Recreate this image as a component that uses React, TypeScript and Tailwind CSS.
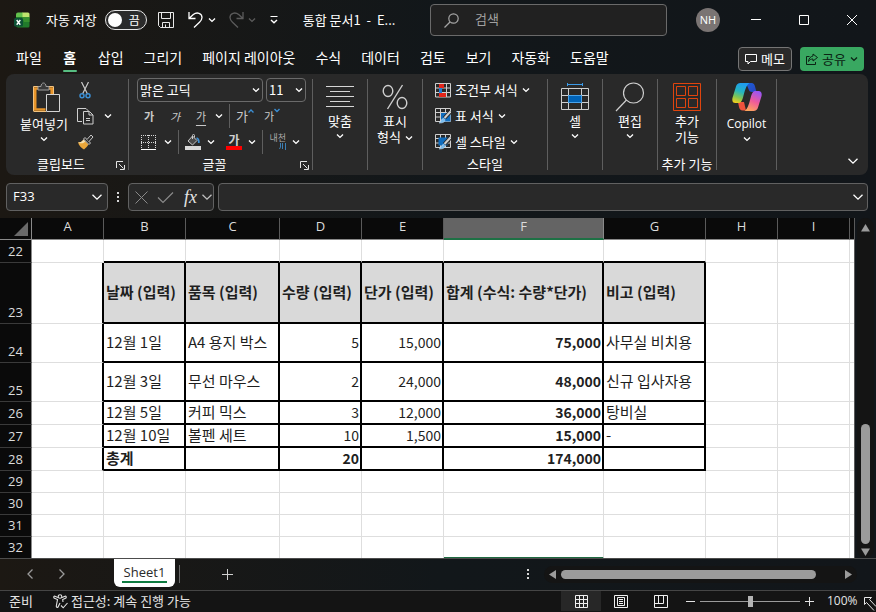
import type { ReactNode } from "react";

/* ---------- small shared pieces ---------- */

function Chevron({ className = "" }: { className?: string }) {
  return (
    <svg width="8" height="8" viewBox="0 0 8 8" fill="none" className={`shrink-0 ${className}`} aria-hidden="true">
      <path d="M1 2.6 4 5.4 7 2.6" stroke="currentColor" strokeWidth="1.4" />
    </svg>
  );
}

function WideChevron({ className = "" }: { className?: string }) {
  return (
    <svg width="12" height="12" viewBox="0 0 12 12" fill="none" className={`shrink-0 ${className}`} aria-hidden="true">
      <path d="M1.5 3.8 6 8.2l4.5-4.4" stroke="currentColor" strokeWidth="1.3" />
    </svg>
  );
}

function Dots() {
  return (
    <svg width="4" height="12" viewBox="0 0 4 12" className="shrink-0" aria-hidden="true">
      <path d="M1 1h2v2H1zM1 5h2v2H1zM1 9h2v2H1z" fill="#d6d6d6" />
    </svg>
  );
}

function Launcher() {
  return (
    <button aria-label="대화 상자 표시" className="text-[#e4e4e4]">
      <svg width="9" height="9" viewBox="0 0 9 9" fill="none" aria-hidden="true">
        <path d="M.5 7V.5H7M3 3l4.5 4.5M8.5 4v4.5H4" stroke="currentColor" />
      </svg>
    </button>
  );
}

function Separator() {
  return <div className="my-[5px] w-px shrink-0 bg-[#5e5e5e]" />;
}

function Group({ label, width, launcher, children }: { label?: string; width: string; launcher?: boolean; children: ReactNode }) {
  return (
    <section className={`flex shrink-0 flex-col pt-[3px] ${width}`}>
      <div className="h-[78px]">{children}</div>
      {label && (
        <div className="flex h-[18px] items-center">
          <span className="flex-1 whitespace-nowrap text-center">{label}</span>
          {launcher && <span className="flex w-[9px] justify-end pt-[3px]"><Launcher /></span>}
        </div>
      )}
    </section>
  );
}

function BigButton({ icon, label, inline, latin }: { icon: ReactNode; label: string; inline?: boolean; latin?: boolean }) {
  const single = !label.includes("\n");
  return (
    <button className="flex w-full flex-col items-center pt-[4px]">
      <span className="flex h-[32px] items-center">{icon}</span>
      <span className={latin ? "mt-[3px] font-['Open_Sans',sans-serif] text-xs leading-4" : "whitespace-pre text-center leading-4"}>
        {label}
        {inline && <Chevron className="ml-1 inline-block" />}
      </span>
      {single && <Chevron className="mt-[3px]" />}
    </button>
  );
}

/* ---------- icons ---------- */

function ExcelIcon() {
  return (
    <svg width="16" height="16" viewBox="0 0 16 16" aria-hidden="true">
      <path d="M2 2.5A2 2 0 0 1 4 .5h5v5H2z" fill="#63c14d" />
      <path d="M8.500 .5H14a1.500 1.500 0 0 1 1.500 1.500v3.500h-7z" fill="#bfe56f" />
      <path d="M2 5h13.500v9A1.500 1.500 0 0 1 14 15.500H4a2 2 0 0 1-2-2z" fill="#217a2b" />
      <path d="M8 5h7.500v5H10z" fill="#38912f" />
      <rect x="0" y="6" width="9" height="8.500" rx="1.500" fill="#0d5135" />
      <path d="m2.700 8 3.600 4.700M6.300 8l-3.600 4.700" stroke="#fff" strokeWidth="1.400" />
    </svg>
  );
}

function SaveIcon() {
  return (
    <svg width="16" height="16" viewBox="0 0 16 16" fill="none" stroke="#e8e8e8" aria-hidden="true">
      <path d="M.5.500h15v15h-13l-2-2zM3.500.500v6h9v-6M4.500 15.500v-5h7v5M7.500 12.500v3" />
    </svg>
  );
}

function UndoIcon() {
  return (
    <svg width="16" height="16" viewBox="0 0 16 16" fill="none" stroke="currentColor" strokeWidth="1.300" aria-hidden="true">
      <path d="M1 0v6.500h6.500M1.300 6.200l4-3.600C9-.400 14 1.200 14 5.500c0 2-1.300 3.500-2.500 4.700L6 15.500" />
    </svg>
  );
}

function PasteIcon() {
  return (
    <svg width="34" height="31" viewBox="-6 0 34 31" fill="none" aria-hidden="true">
      <path d="M12.500 27.500H2.200V6.500H5M16 6.500h2.700V12" stroke="#e8952a" strokeWidth="2.600" />
      <path d="M.5 29V4.500h5M15.500 4.500h5V12M.5 29.500H13" stroke="#f4c27d" />
      <path d="M5 8V4.500h3C8 2.500 9 1 10.500 1S13 2.500 13 4.500h3V8z" fill="#3a3a3a" stroke="#9d9d9d" />
      <path d="M13.500 12.500h13v17h-13z" fill="#292929" stroke="#d4d4d4" />
    </svg>
  );
}

function CutIcon() {
  return (
    <svg width="12" height="17" viewBox="0 0 12 17" fill="none" aria-hidden="true">
      <path d="M2.500 0 8.500 12M9.500 0l-6 12" stroke="#c9c9c9" strokeWidth="1.200" />
      <circle cx="3" cy="13.700" r="2" stroke="#3c8fd4" strokeWidth="1.500" />
      <circle cx="9" cy="13.700" r="2" stroke="#3c8fd4" strokeWidth="1.500" />
    </svg>
  );
}

function CopyIcon() {
  return (
    <svg width="17" height="17" viewBox="0 0 17 17" fill="none" stroke="#cfcfcf" aria-hidden="true">
      <path d="M5 13.500H.5V.500H9L11.500 3" />
      <path d="M6.500 3.500h6l3.500 3.500v9H6.500zM12 3.500V7h4M9 10.500h4M9 12.500h4" />
    </svg>
  );
}

function BrushIcon() {
  return (
    <svg width="17" height="16" viewBox="0 0 17 16" fill="none" aria-hidden="true">
      <path d="M1 8.500c3 0 4-1 5.500-3l5 5C10 12.500 9 14 7 15.500 4.500 14 2 12 1 8.500z" fill="#e9a63a" />
      <path d="M1 8.500c3 0 4-1 5.500-3l2 2C6 9.500 4 10 1 8.500z" fill="#f6dfab" />
      <path d="m6.500 5 5.500 5.500 1.500-1.500L8 3.500z" fill="#292929" stroke="#c9c9c9" />
      <path d="m10 5.500 4-4.500 2 2-4 4.500" fill="#292929" stroke="#c9c9c9" />
    </svg>
  );
}

function BorderIcon() {
  return (
    <svg width="15" height="15" viewBox="0 0 15 15" fill="none" stroke="#d8d8d8" aria-hidden="true">
      <path d="M0 .5h15M0 7.500h15M.5 0v14M7.500 0v14M14.500 0v14" strokeDasharray="1 1" />
      <path d="M0 14.500h15" stroke="#fff" />
    </svg>
  );
}

function FillIcon() {
  return (
    <svg width="16" height="16" viewBox="0 0 16 16" fill="none" aria-hidden="true">
      <path d="m7.500 2 4.500 4.500L7.500 11 3 7z" fill="#4a4a4a" stroke="#c9c9c9" />
      <path d="M7.500 5V1.500a1 1 0 0 1 2 0v2" stroke="#c9c9c9" />
      <path d="M11.500 4c2 .5 2.500 2.500 2.300 5" stroke="#3c8fd4" strokeWidth="1.800" />
      <path d="M0 12h16v4H0z" fill="#d9d9d9" />
    </svg>
  );
}

function AlignIcon() {
  return (
    <svg width="28" height="22" viewBox="0 0 28 22" stroke="#d6d6d6" aria-hidden="true">
      <path d="M0 .5h28M4 5.500h20M0 10.500h28M4 15.500h20M0 20.500h28" />
    </svg>
  );
}

function PercentIcon() {
  return (
    <svg width="26" height="26" viewBox="0 0 26 26" fill="none" stroke="#cfcfcf" strokeWidth="1.400" aria-hidden="true">
      <ellipse cx="6" cy="7" rx="4.800" ry="5.500" />
      <ellipse cx="20" cy="19" rx="4.800" ry="5.500" />
      <path d="M20.500 1 5.500 25" />
    </svg>
  );
}

function ConditionalIcon() {
  return (
    <svg width="16" height="15" viewBox="0 0 16 15" fill="none" aria-hidden="true">
      <path d="M.5.500h15v13.500H.500zM4.500.500V14M11.500.500V14M.5 5H16M.5 9.500H16" stroke="#cfcfcf" />
      <path d="M4 1h5v4H4zM4 10h7v4H4z" fill="#e3261b" />
      <path d="M4 5h3v5H4z" fill="#1f7fd6" />
    </svg>
  );
}

function TableFormatIcon({ filled }: { filled?: boolean }) {
  return (
    <svg width="16" height="16" viewBox="0 0 16 16" fill="none" aria-hidden="true">
      <path d="M.5.500h15v13H.500zM5.500.500v13M10.500.500v13M.5 4.500H16M.5 9H16" stroke="#cfcfcf" />
      {filled ? <path d="M3.500 3.500h9v8h-9z" fill="#0f6cbd" /> : <path d="M6 5h9.500v8.500H6z" fill="#0f6cbd" />}
      <path d="m15.500 3.500-6 6.500" stroke="#292929" strokeWidth="4" />
      <path d="m15.500 3.500-6 6.500" stroke="#d0d0d0" strokeWidth="2" />
      <path d="M4 15c2-.5 2-4.500 4.500-4.500 2.500.5 2 5-4.500 4.500z" fill="#79bdf0" stroke="#cfe7fa" strokeWidth=".5" />
    </svg>
  );
}

function CellsIcon() {
  return (
    <svg width="28" height="28" viewBox="0 0 28 28" fill="none" aria-hidden="true">
      <path d="M6.500 1.500h15M6.500 0v3M21.500 0v3" stroke="#3c9be8" />
      <path d="M.5 5.500h27v21H.500zM7.500 5.500v21M20.500 5.500v21M.5 12.500h27M.5 19.500h27" stroke="#cfcfcf" />
      <path d="M7.500 12.500h13v7h-13z" fill="#0063b8" stroke="#4aa3ea" />
    </svg>
  );
}

function EditIcon() {
  return (
    <svg width="30" height="30" viewBox="0 0 30 30" fill="none" stroke="#cfcfcf" strokeWidth="1.200" aria-hidden="true">
      <circle cx="18.500" cy="11" r="10" />
      <path d="M11.500 18 1 29" />
    </svg>
  );
}

function AddInsIcon() {
  return (
    <svg width="28" height="28" viewBox="0 0 28 28" fill="none" stroke="#e0440e" aria-hidden="true">
      <path d="M.5.500h27v27H.500zM3.500 3.500h9v9h-9zM15.500 3.500h9v9h-9zM3.500 15.500h9v9h-9zM15.500 15.500h9v9h-9z" />
    </svg>
  );
}

function CopilotIcon() {
  return (
    <svg width="30" height="28" viewBox="0 0 30 28" aria-hidden="true">
      <defs>
        <linearGradient id="cpA" x1="0.500" y1="0" x2="0.200" y2="1">
          <stop offset="0" stopColor="#1f9cf0" />
          <stop offset=".4" stopColor="#25b5c0" />
          <stop offset=".7" stopColor="#7fc455" />
          <stop offset="1" stopColor="#f5cf1b" />
        </linearGradient>
        <linearGradient id="cpB" x1="0.700" y1="0" x2="0.300" y2="1">
          <stop offset="0" stopColor="#9a55f5" />
          <stop offset=".5" stopColor="#ef5a9b" />
          <stop offset="1" stopColor="#fda45c" />
        </linearGradient>
        <linearGradient id="cpC" x1="0" y1="0" x2="1" y2="1">
          <stop offset="0" stopColor="#1a5fd8" />
          <stop offset="1" stopColor="#2a45c0" />
        </linearGradient>
      </defs>
      <path d="M14 0h5.500c2 0 3 1.500 3.500 3.500L24.500 9H20c-2 0-3-1-3.500-3z" fill="url(#cpC)" />
      <path d="M6 19h6l2 8.500h-3.500c-2 0-3-1.500-3.500-3.500z" fill="#f0523d" />
      <path d="M8.500 0h9C14 2 12.500 9 11 14.500c-1 3.500-2 5.500-5 5.500H3.500C.5 20-.2 17.500.6 14.500L4 3.500C4.700 1.500 6 0 8.500 0z" fill="url(#cpA)" />
      <path d="M21.500 28h-9c3.500-2 5-9 6.500-14.500 1-3.500 2-5.500 5-5.500h2.500c3 0 3.700 2.500 2.900 5.500L26 24.500C25.300 26.500 24 28 21.500 28z" fill="url(#cpB)" />
    </svg>
  );
}

/* ---------- title bar and tabs ---------- */

function TitleBar() {
  return (
    <header className="flex h-10 items-center">
      <div className="flex w-[430px] shrink-0 items-center pl-[14px] text-[13px]">
        <ExcelIcon />
        <label className="ml-4 flex items-center gap-2 whitespace-nowrap">
          자동 저장
          <input type="checkbox" role="switch" className="peer sr-only" />
          <span className="flex h-5 w-[42px] items-center justify-between rounded-full border border-[#e6e6e6] bg-[#2b2b2b] pl-[2px] pr-[6px]">
            <span className="size-[14px] rounded-full bg-white" />
            <span className="text-xs">끔</span>
          </span>
        </label>
        <button aria-label="저장" className="ml-[11px]"><SaveIcon /></button>
        <button aria-label="실행 취소" className="ml-[14px] flex items-center gap-1"><UndoIcon /><Chevron /></button>
        <button aria-label="다시 실행" className="ml-3 flex items-center gap-1 text-[#5b5b5b]">
          <span className="-scale-x-100"><UndoIcon /></span><Chevron />
        </button>
        <button aria-label="빠른 실행 도구 모음 사용자 지정" className="ml-[14px]">
          <svg width="8" height="8" viewBox="0 0 8 8" fill="none" stroke="currentColor" aria-hidden="true">
            <path d="M.5.500h7" /><path d="M1 4l3 2.800L7 4" strokeWidth="1.400" />
          </svg>
        </button>
        <h1 className="ml-[25px] whitespace-pre">통합 문서1  -  E...</h1>
      </div>
      <label className="flex h-8 min-w-0 flex-1 items-center gap-4 rounded border border-[#6a6a6a] bg-[#212121] px-[13px]">
        <svg width="15" height="15" viewBox="0 0 15 15" fill="none" stroke="#a5a5a5" strokeWidth="1.200" className="shrink-0" aria-hidden="true">
          <circle cx="9.500" cy="5.500" r="4.700" /><path d="M6 9 .5 14.500" />
        </svg>
        <input type="search" aria-label="검색" placeholder="검색" className="min-w-0 flex-1 bg-transparent pb-[3px] text-[13px] outline-none placeholder:text-[#a0a0a0]" />
      </label>
      <button className="ml-[29px] mr-3 size-6 rounded-full bg-[#7a7473] font-['Open_Sans',sans-serif] text-[11px]">NH</button>
      <button aria-label="최소화" className="flex h-10 w-12 items-center justify-center">
        <svg width="10" height="10" stroke="#fff" aria-hidden="true"><path d="M0 4.500h10" /></svg>
      </button>
      <button aria-label="최대화" className="flex h-10 w-12 items-center justify-center">
        <svg width="10" height="10" fill="none" stroke="#fff" aria-hidden="true"><path d="M.5.500h9v9h-9z" /></svg>
      </button>
      <button aria-label="닫기" className="flex h-10 w-12 items-center justify-center">
        <svg width="10" height="10" stroke="#fff" aria-hidden="true"><path d="m0 0 10 10M10 0 0 10" /></svg>
      </button>
    </header>
  );
}

const tabs = ["파일", "홈", "삽입", "그리기", "페이지 레이아웃", "수식", "데이터", "검토", "보기", "자동화", "도움말"];

function TabRow() {
  return (
    <div className="flex h-[34px] items-center pl-4 pr-3 pt-1">
      <nav className="flex flex-1 gap-5 text-sm">
        {tabs.map((tab) => (
          <button
            key={tab}
            className={`flex h-[26px] flex-col items-center justify-between whitespace-nowrap leading-[22px] ${tab === "홈" ? "px-px font-bold" : ""}`}
          >
            {tab}
            {tab === "홈" && <span className="h-[2px] w-[14px] rounded bg-[#57bd82]" />}
          </button>
        ))}
      </nav>
      <button className="flex h-6 w-[54px] items-center justify-center gap-1 rounded border border-[#757575] bg-[#2a2a2a] text-[13px]">
        <svg width="12" height="12" viewBox="0 0 12 12" fill="none" stroke="#fff" aria-hidden="true">
          <path d="M.5 1.500h11v7h-6l-2.500 2.500V8.500H.500z" />
        </svg>
        메모
      </button>
      <button className="ml-2 flex h-6 w-16 items-center justify-center gap-1 rounded bg-[#39a861] text-[13px] text-[#0b2314]">
        <svg width="12" height="12" viewBox="0 0 12 12" fill="none" stroke="currentColor" aria-hidden="true">
          <path d="M3.500 3.500h-3v8h9V9M7 1l4.500 3.500L7 8V6C5 6 3.500 6.500 2.500 8.500 2.700 5.500 4.500 3.500 7 3z" />
        </svg>
        공유
        <Chevron />
      </button>
    </div>
  );
}

/* ---------- ribbon ---------- */

function Ribbon() {
  return (
    <div className="mx-2 ml-[6px] flex h-[101px] overflow-hidden rounded-lg bg-[#292929] text-[13px] leading-4">
      <Group label="클립보드" width="w-[122px] pr-[3px]" launcher>
        <div className="flex pl-[13px]">
          <button className="flex w-[50px] flex-col items-center pt-[5px]">
            <PasteIcon />
            <span className="mt-[3px] whitespace-nowrap">붙여넣기</span>
            <Chevron className="mt-[3px]" />
          </button>
          <div className="flex flex-col pl-2">
            <button aria-label="잘라내기" className="flex h-[26px] items-center pl-[2px]"><CutIcon /></button>
            <button aria-label="복사" className="flex h-[26px] items-center gap-[10px]"><CopyIcon /><Chevron /></button>
            <button aria-label="서식 복사" className="flex h-[26px] items-center"><BrushIcon /></button>
          </div>
        </div>
      </Group>
      <Separator />
      <Group label="글꼴" width="w-[183px] pr-[3px]" launcher>
        <div className="pl-2">
          <div className="flex h-[26px] items-center gap-[3px]">
            <label className="flex h-6 w-[126px] items-center rounded border border-[#6a6a6a] pl-[2px] pr-[2px]">
              <select aria-label="글꼴" className="min-w-0 flex-1 appearance-none bg-transparent outline-none"><option>맑은 고딕</option></select>
              <Chevron />
            </label>
            <label className="flex h-6 w-[40px] items-center rounded border border-[#6a6a6a] pl-[2px] pr-[2px]">
              <select aria-label="글꼴 크기" className="min-w-0 flex-1 appearance-none bg-transparent outline-none"><option>11</option></select>
              <Chevron />
            </label>
          </div>
          <div className="flex h-[26px] items-center text-[11px] text-[#c9c9c9]">
            <button className="w-6 text-center font-bold">가</button>
            <button className="ml-[2px] w-6 text-center italic">가</button>
            <button className="ml-[2px] w-6 text-center underline underline-offset-4">가</button>
            <Chevron className="ml-[2px] text-white" />
            <span className="mx-[6px] h-6 w-px bg-[#5e5e5e]" />
            <button aria-label="글꼴 크기 크게" className="flex w-[20px] text-[13px]">
              가<svg width="6" height="6" fill="none" stroke="#3c8fd4" strokeWidth="1.400" aria-hidden="true"><path d="M.5 4.500 3 2l2.500 2.500" /></svg>
            </button>
            <button aria-label="글꼴 크기 작게" className="ml-2 flex w-[20px]">
              가<svg width="6" height="6" fill="none" stroke="#3c8fd4" strokeWidth="1.400" aria-hidden="true"><path d="M.5 1 3 3.500 5.500 1" /></svg>
            </button>
          </div>
          <div className="flex h-[26px] items-center">
            <button aria-label="테두리" className="flex items-center gap-2 pl-1"><BorderIcon /><Chevron /></button>
            <span className="mx-[6px] h-6 w-px bg-[#5e5e5e]" />
            <button aria-label="채우기 색" className="flex items-center gap-[6px]"><FillIcon /><Chevron /></button>
            <button aria-label="글꼴 색" className="ml-[11px] flex items-center gap-[6px]">
              <span className="flex w-4 flex-col items-center text-xs font-bold leading-3 text-[#d0d0d0]">가<span className="h-1 w-4 bg-[#fe0000]" /></span>
              <Chevron />
            </button>
            <span className="mx-[6px] h-6 w-px bg-[#5e5e5e]" />
            <button aria-label="윗주 필드" className="flex items-center gap-[6px]">
              <span className="flex w-[17px] flex-col items-end text-[9px] leading-2 text-[#a8a8a8]">
                <span className="whitespace-nowrap">내천</span>
                <svg width="7" height="8" fill="none" stroke="#3c7fb4" aria-hidden="true"><path d="M1.500 1v4L.5 7M3.500 1v6M6.500 1v7" /></svg>
              </span>
              <Chevron />
            </button>
          </div>
        </div>
      </Group>
      <Separator />
      <Group width="w-[54px]"><BigButton icon={<AlignIcon />} label="맞춤" /></Group>
      <Separator />
      <Group width="w-[54px]"><BigButton icon={<PercentIcon />} label={"표시\n형식"} inline /></Group>
      <Separator />
      <Group label="스타일" width="w-[124px]">
        <div className="flex flex-col items-start pl-3">
          <button className="flex h-[26px] items-center gap-1 whitespace-nowrap"><ConditionalIcon />조건부 서식<Chevron /></button>
          <button className="flex h-[26px] items-center gap-1 whitespace-nowrap"><TableFormatIcon />표 서식<Chevron /></button>
          <button className="flex h-[26px] items-center gap-1 whitespace-nowrap"><TableFormatIcon filled />셀 스타일<Chevron /></button>
        </div>
      </Group>
      <Separator />
      <Group width="w-[54px]"><BigButton icon={<CellsIcon />} label="셀" /></Group>
      <Separator />
      <Group width="w-[54px]"><BigButton icon={<EditIcon />} label="편집" /></Group>
      <Separator />
      <Group label="추가 기능" width="w-[58px]"><BigButton icon={<AddInsIcon />} label={"추가\n기능"} /></Group>
      <Separator />
      <Group width="w-[59px]"><BigButton icon={<CopilotIcon />} label="Copilot" latin /></Group>
      <Separator />
      <button aria-label="리본 메뉴 축소" className="ml-auto mr-[9px] self-end pb-2"><WideChevron /></button>
    </div>
  );
}

/* ---------- formula bar ---------- */

function FormulaBar() {
  return (
    <div className="mt-2 mb-[7px] ml-[6px] mr-2 flex h-7 items-stretch">
      <label className="flex w-[102px] items-center rounded border border-[#616161] bg-[#292929] pl-[6px] pr-1">
        <input aria-label="이름 상자" defaultValue="F33" className="min-w-0 flex-1 bg-transparent font-['Open_Sans',sans-serif] text-[13px] outline-none" />
        <WideChevron />
      </label>
      <div className="flex w-5 items-center justify-center"><Dots /></div>
      <div className="flex w-[86px] items-center rounded border border-[#616161] bg-[#292929] pl-[6px] text-[#8a8a8a]">
        <button aria-label="취소"><svg width="13" height="13" stroke="currentColor" aria-hidden="true"><path d="m.5.500 12 12M12.500.500l-12 12" /></svg></button>
        <button aria-label="입력" className="ml-[9px]"><svg width="17" height="13" fill="none" stroke="currentColor" strokeWidth="1.200" aria-hidden="true"><path d="m1 6.500 5 5L16 1.500" /></svg></button>
        <button className="ml-[9px] w-[15px] font-['Liberation_Serif',serif] text-lg italic leading-5 text-[#e4e4e4]">fx</button>
        <WideChevron className="ml-[3px] text-[#c0c0c0]" />
      </div>
      <label className="ml-1 flex min-w-0 flex-1 items-center rounded border border-[#616161] bg-[#292929] pr-[3px]">
        <input aria-label="수식 입력줄" className="min-w-0 flex-1 bg-transparent px-2 text-[13px] outline-none" />
        <WideChevron />
      </label>
    </div>
  );
}

/* ---------- worksheet ---------- */

const columns = [
  { name: "A", width: "w-[72px]" },
  { name: "B", width: "w-[82px]" },
  { name: "C", width: "w-[94px]" },
  { name: "D", width: "w-[82px]" },
  { name: "E", width: "w-[82px]" },
  { name: "F", width: "w-[160px]" },
  { name: "G", width: "w-[102px]" },
  { name: "H", width: "w-[72px]" },
  { name: "I", width: "w-[72px]" },
];

type Row = { n: number; height: string; kind: "empty" | "head" | "data" | "total"; cells: string[] };

const rows: Row[] = [
  { n: 22, height: "h-[23px]", kind: "empty", cells: [] },
  { n: 23, height: "h-[61px]", kind: "head", cells: ["날짜 (입력)", "품목 (입력)", "수량 (입력)", "단가 (입력)", "합계 (수식: 수량*단가)", "비고 (입력)"] },
  { n: 24, height: "h-[39px]", kind: "data", cells: ["12월 1일", "A4 용지 박스", "5", "15,000", "75,000", "사무실 비치용"] },
  { n: 25, height: "h-[39px]", kind: "data", cells: ["12월 3일", "무선 마우스", "2", "24,000", "48,000", "신규 입사자용"] },
  { n: 26, height: "h-[23px]", kind: "data", cells: ["12월 5일", "커피 믹스", "3", "12,000", "36,000", "탕비실"] },
  { n: 27, height: "h-[23px]", kind: "data", cells: ["12월 10일", "볼펜 세트", "10", "1,500", "15,000", "-"] },
  { n: 28, height: "h-[23px]", kind: "total", cells: ["총계", "", "20", "", "174,000", ""] },
  { n: 29, height: "h-[22px]", kind: "empty", cells: [] },
  { n: 30, height: "h-[22px]", kind: "empty", cells: [] },
  { n: 31, height: "h-[22px]", kind: "empty", cells: [] },
  { n: 32, height: "h-[22px]", kind: "empty", cells: [] },
];

function cellClass(row: Row, col: number) {
  const framed = row.kind !== "empty";
  const inFrame = col >= 1 && col <= 6;
  const classes = ["overflow-hidden whitespace-nowrap p-0 pb-px align-middle"];
  if (framed && col <= 6) classes.push("border-r-2 border-r-black");
  else classes.push("border-r border-r-[#dedede]");
  if (inFrame && (framed || row.n === 22)) classes.push("border-b-2 border-b-black");
  else if (row.n === 32 && col === 5) classes.push("border-b-2 border-b-[#1e6b41]");
  else classes.push("border-b border-b-[#dedede]");
  const numeric = row.kind !== "head" && col >= 3 && col <= 5;
  classes.push(numeric ? "pr-px text-right text-sm" : "pl-[2px] text-left text-[15px]");
  if (row.kind === "head" && inFrame) classes.push("bg-[#d9d9d9]");
  if (row.kind === "head" || row.kind === "total" || (framed && col === 5)) classes.push("font-bold");
  return classes.join(" ");
}

function Sheet() {
  return (
    <div className="min-w-0 flex-1 overflow-hidden border-r border-[#5a5a5a] bg-white text-[#1f1f1f]">
      <table className="w-full table-fixed border-separate border-spacing-0 leading-5">
        <colgroup>
          <col className="w-8" />
          {columns.map((c) => <col key={c.name} className={c.width} />)}
          <col />
        </colgroup>
        <thead>
          <tr className="h-[22px] bg-[#0a0a0a] font-['Open_Sans',sans-serif] text-[13px] leading-4 text-[#dcdcdc]">
            <td className="border-r border-b border-[#8a8a8a] p-0 align-bottom">
              <svg width="14" height="14" className="mb-[3px] ml-[14px] block" aria-hidden="true"><path d="M14 0v14H0z" fill="#6a6a6a" /></svg>
            </td>
            {columns.map((c) => (
              <th
                key={c.name}
                scope="col"
                className={c.name === "F" ? "border-r border-b-2 border-r-[#8a8a8a] border-b-[#1e7145] bg-[#646464] p-0 pb-1 font-normal" : "border-r border-b border-r-[#5a5a5a] border-b-[#8a8a8a] p-0 pb-[5px] font-normal"}
              >
                {c.name}
              </th>
            ))}
            <td className="border-b border-[#8a8a8a] p-0" />
          </tr>
        </thead>
        <tbody>
          {rows.map((row) => (
            <tr key={row.n} className={row.height}>
              <th scope="row" className="border-r border-b border-r-[#8a8a8a] border-b-[#3a3a3a] bg-[#0a0a0a] p-0 pb-[2px] text-center align-bottom font-['Open_Sans',sans-serif] text-[13px] leading-[18px] font-normal text-[#dcdcdc]">
                {row.n}
              </th>
              {columns.map((c, i) => {
                const text = row.cells[i - 1] ?? "";
                return row.kind === "head" && text ? (
                  <th key={c.name} scope="col" className={cellClass(row, i)}>{text}</th>
                ) : (
                  <td key={c.name} className={cellClass(row, i)}>{text}</td>
                );
              })}
              <td className="border-b border-[#dedede] p-0" />
            </tr>
          ))}
        </tbody>
      </table>
    </div>
  );
}

function VerticalScroll() {
  return (
    <div className="flex w-[21px] shrink-0 justify-center pr-px">
      <div className="flex w-[17px] flex-col items-center rounded-full bg-[#141414] pt-[6px] pb-[2px]">
        <svg width="9" height="8" aria-hidden="true"><path d="M4.500 0 9 7.500H0z" fill="#9b9b9b" /></svg>
        <div className="flex-1" />
        <div className="h-[120px] w-[9px] rounded-full bg-[#9b9b9b]" />
        <svg width="9" height="8" className="mt-1" aria-hidden="true"><path d="M0 .5h9L4.500 8z" fill="#9b9b9b" /></svg>
      </div>
    </div>
  );
}

/* ---------- sheet tabs and status bar ---------- */

function SheetBar() {
  return (
    <div className="flex h-8 shrink-0 items-center border-t border-[#4c4c4c] pb-px">
      <div className="flex w-[114px] gap-6 pl-[26px] text-[#9a9a9a]">
        <button aria-label="이전 시트"><svg width="8" height="10" fill="none" stroke="currentColor" strokeWidth="1.300" aria-hidden="true"><path d="M6.500.500 2 5l4.500 4.500" /></svg></button>
        <button aria-label="다음 시트"><svg width="8" height="10" fill="none" stroke="currentColor" strokeWidth="1.300" aria-hidden="true"><path d="M1.500.500 6 5 1.500 9.500" /></svg></button>
      </div>
      <button className="flex h-7 w-[61px] flex-col items-center self-start rounded-b-md bg-white pt-1 font-['Open_Sans',sans-serif] text-[13px] leading-[18px] text-[#2a2a2a]">
        Sheet1
        <span className="h-[2px] w-[45px] bg-[#107c41]" />
      </button>
      <span className="ml-1 h-[18px] w-px bg-[#6a6a6a]" />
      <button aria-label="새 시트" className="ml-[42px]"><svg width="11" height="11" stroke="#d0d0d0" aria-hidden="true"><path d="M5.500 0v11M0 5.500h11" /></svg></button>
      <div className="flex-1" />
      <Dots />
      <div className="ml-[14px] mr-[19px] flex h-[17px] w-[313px] items-center rounded-full bg-[#141414] px-[5px]">
        <svg width="7" height="9" aria-hidden="true"><path d="M7 0v9L0 4.500z" fill="#9b9b9b" /></svg>
        <span className="ml-[5px] h-[9px] w-[255px] rounded-full bg-[#9b9b9b]" />
        <span className="flex-1" />
        <svg width="7" height="9" aria-hidden="true"><path d="M0 0v9l7-4.500z" fill="#9b9b9b" /></svg>
      </div>
    </div>
  );
}

function StatusBar() {
  return (
    <footer className="flex h-[22px] shrink-0 items-center border-t border-[#454545] bg-[#141414] pb-px pl-[9px] text-[13px] leading-[18px] text-[#e4e4e4]">
      <span>준비</span>
      <button className="ml-5 flex items-center gap-[3px] whitespace-nowrap">
        <svg width="15" height="15" viewBox="0 0 15 15" fill="none" stroke="currentColor" strokeWidth="1.100" aria-hidden="true">
          <circle cx="7" cy="2.500" r="1.800" />
          <path d="M5 3.500 2 2.200C.6 1.800.3 3.600 1.500 4.200L4.500 5.500 3.300 12c-.2 1.500 1.500 2 2 .5L7 9M9 3.500l3-1.300c1.400-.4 1.700 1.400.5 2L9.700 5.500 10 8M8 11.500l2.200 2.300L14.500 9" />
        </svg>
        접근성: 계속 진행 가능
      </button>
      <div className="flex-1" />
      <button aria-label="기본" className="flex h-full w-10 items-center justify-center bg-[#272727]">
        <svg width="13" height="13" fill="none" stroke="#f0f0f0" aria-hidden="true"><path d="M.5.500h12v12H.500zM4.500.500v12M8.500.500v12M.5 4.500h12M.5 8.500h12" /></svg>
      </button>
      <button aria-label="페이지 레이아웃" className="flex h-full w-10 items-center justify-center">
        <svg width="14" height="13" fill="none" stroke="#f0f0f0" aria-hidden="true"><path d="M.5.500h13v12H.500zM3.500 2.500h7v8h-7zM5 4.500h4M5 6.500h4M5 8.500h4" /></svg>
      </button>
      <button aria-label="페이지 나누기 미리 보기" className="flex h-full w-10 items-center justify-center">
        <svg width="14" height="13" fill="none" stroke="#f0f0f0" aria-hidden="true"><path d="M.5.500h13v12H.500zM.5 8.500h9v-8M4.500.500v8" /></svg>
      </button>
      <button aria-label="축소" className="ml-[5px]"><svg width="9" height="9" stroke="#e4e4e4" aria-hidden="true"><path d="M0 4.500h9" /></svg></button>
      <input
        type="range"
        aria-label="확대/축소"
        defaultValue={50}
        className="mx-[5px] h-px w-[100px] appearance-none bg-[#9b9b9b] [&::-webkit-slider-thumb]:h-[11px] [&::-webkit-slider-thumb]:w-[5px] [&::-webkit-slider-thumb]:appearance-none [&::-webkit-slider-thumb]:rounded-none [&::-webkit-slider-thumb]:bg-[#b4b4b4]"
      />
      <button aria-label="확대"><svg width="9" height="9" stroke="#e4e4e4" aria-hidden="true"><path d="M0 4.500h9M4.500 0v9" /></svg></button>
      <button className="ml-[13px] w-[37px] text-left font-['Open_Sans',sans-serif] text-xs">100%</button>
      <svg width="12" height="14" viewBox="0 0 12 14" fill="#141414" stroke="#e8e8e8" className="self-end" aria-hidden="true">
        <path d="M.5.500h7L5.500 2.500 12 9.500M.5.500v7l2-2L10 13.500" />
      </svg>
    </footer>
  );
}

export default function App() {
  return (
    <div className="flex h-screen flex-col overflow-hidden bg-linear-to-r from-[#1c1813] via-[#12171a] to-[#12161a] font-['Noto_Sans_CJK_KR',sans-serif] text-white">
      <TitleBar />
      <TabRow />
      <Ribbon />
      <FormulaBar />
      <main className="flex min-h-0 flex-1">
        <Sheet />
        <VerticalScroll />
      </main>
      <SheetBar />
      <StatusBar />
    </div>
  );
}
